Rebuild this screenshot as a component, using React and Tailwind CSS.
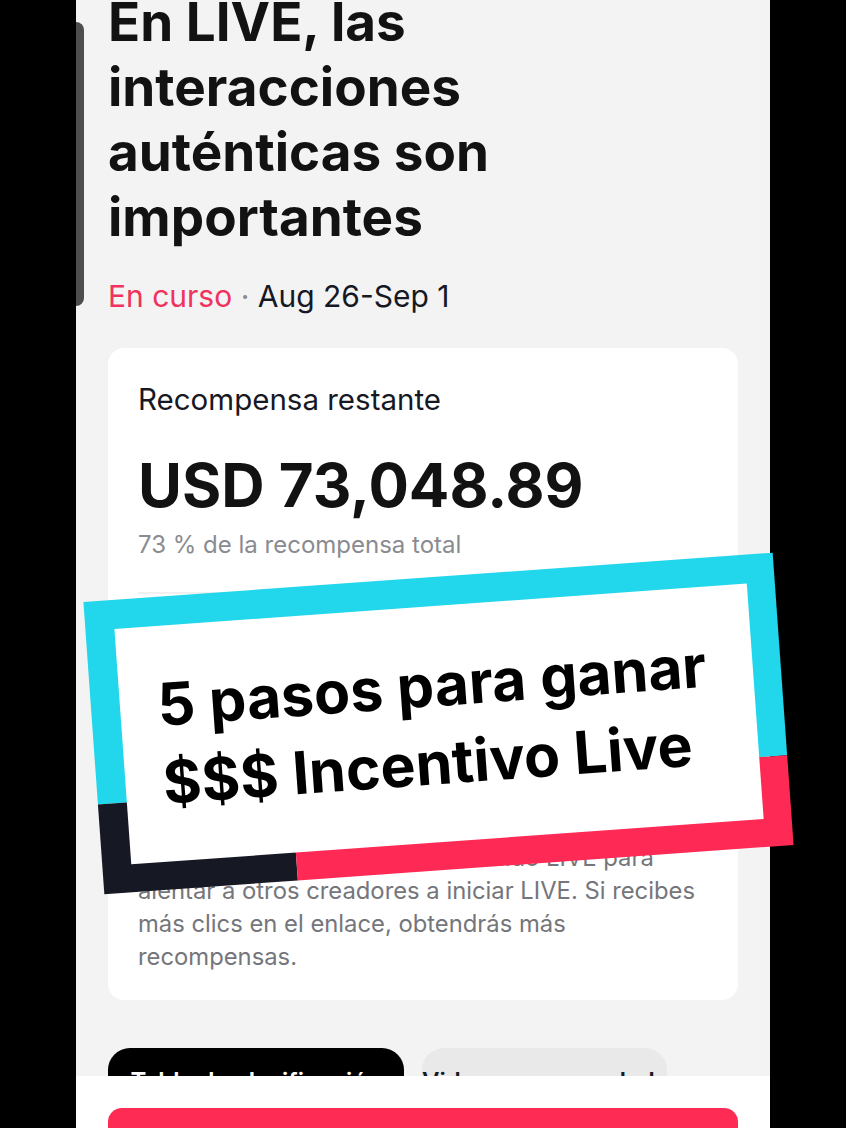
import React from 'react'

const DESC = [
  'Comparte el enlace de tu contenido LIVE para',
  'alentar a otros creadores a iniciar LIVE. Si recibes',
  'más clics en el enlace, obtendrás más',
  'recompensas.',
]

function PromoFrame() {
  // tilted sticker over the page
  return (
    <div className="absolute left-[17px] top-[576.5px] w-[691px] h-[293px] rotate-[-4.1deg]">
      <div className="flex flex-col w-full h-full">
        <div className="h-[203px] bg-[#22d6eb]" />
        <div className="flex flex-1">
          <div className="w-[194px] bg-[#161824]" />
          <div className="flex-1 bg-[#fe2a55]" />
        </div>
      </div>
      <div className="absolute inset-[28.5px] bg-white flex flex-col justify-center pl-[38px]">
        <p className="text-[59px] leading-[78px] font-bold text-black whitespace-nowrap">5 pasos para ganar</p>
        <p className="text-[59px] leading-[78px] font-bold text-black whitespace-nowrap">$$$ Incentivo Live</p>
      </div>
    </div>
  )
}

export default function App() {
  return (
    <div className="min-h-screen bg-black flex justify-center">
      <div className="relative w-[694px] h-[1128px] bg-[#f3f3f3] font-['Inter',sans-serif] text-[#161823]">
        {/* scroll indicator */}
        <div className="absolute left-0 top-[22px] w-[8px] h-[284px] rounded-r-full bg-[#4d4d4d]" />

        <div className="px-8 h-full overflow-hidden">
          <h1 className="mt-[-10px] text-[53px] leading-[65px] font-bold text-[#121212]">
            En LIVE, las<br />interacciones<br />auténticas son<br />importantes
          </h1>

          <p className="mt-[26px] text-[30px] leading-[40px]">
            <span className="text-[#f0325e]">En curso</span>
            <span className="text-[#8a8b91]"> · </span>
            <span>Aug 26-Sep 1</span>
          </p>

          {/* reward card */}
          <div className="mt-[31.6px] bg-white rounded-[16px] px-[30px] pt-[34px] pb-[27.5px]">
            <p className="text-[29.5px] leading-[34px]">Recompensa restante</p>
            <p className="mt-[34px] text-[60px] leading-[70px] font-bold text-[#121212]">USD 73,048.89</p>
            <p className="mt-[10px] text-[24px] leading-[30px] text-[#8a8b91]">73 % de la recompensa total</p>

            <div className="h-[281px] flex flex-col">
              <div className="mt-[32px] h-[2px] bg-[#f0f0f0]" />
              <p className="mt-[150px] text-[26px] leading-[34px] font-semibold">Cómo ganar</p>
            </div>

            <div className="text-[23.8px] leading-[33px] text-[#75767b] whitespace-nowrap">
              {DESC.map((l) => (
                <p key={l}>{l}</p>
              ))}
            </div>
          </div>

          {/* tabs */}
          <div className="mt-[48px] flex gap-[18px]">
            <div className="w-[296px] h-[56px] rounded-[22px] bg-black text-white text-[24px] leading-[30px] font-semibold text-center pt-[19px] whitespace-nowrap">
              Tabla de clasificación
            </div>
            <div className="w-[245px] h-[56px] rounded-[22px] bg-[#e9e9e9] text-[24px] leading-[30px] font-semibold text-center pt-[19px] whitespace-nowrap">
              Videos recomendados
            </div>
          </div>
        </div>

        {/* sticky footer */}
        <div className="absolute left-0 right-0 bottom-0 h-[52px] bg-white px-8 pt-8 overflow-hidden">
          <div className="h-[60px] rounded-[14px] bg-[#fe2c55]" />
        </div>

        <PromoFrame />
      </div>
    </div>
  )
}
